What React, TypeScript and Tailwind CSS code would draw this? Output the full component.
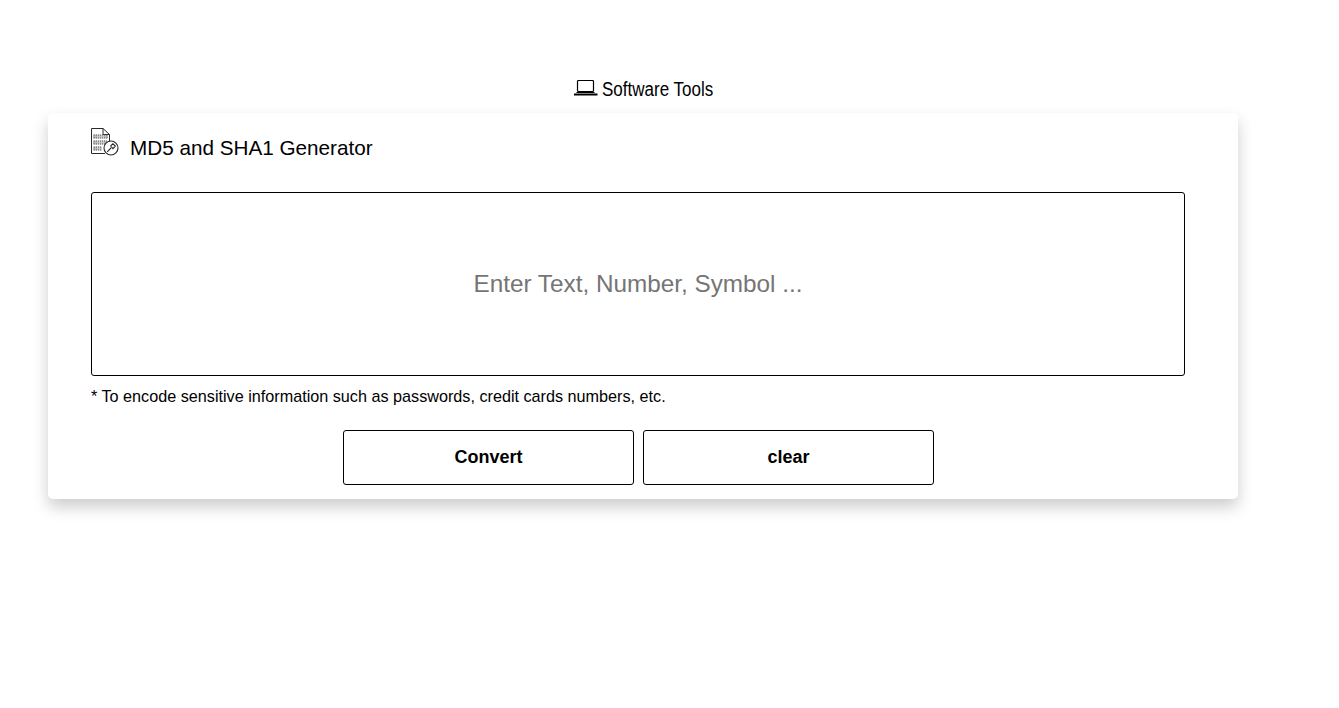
import React from 'react';

const font = { fontFamily: '"Liberation Sans", Arial, sans-serif' };

const LaptopIcon = () => (
  <svg width="24" height="17" viewBox="0 0 24 17" fill="none" stroke="#000">
    <rect x="3.5" y="0.5" width="16" height="11" rx="1" strokeWidth="1.2" />
    <path d="M0 14.5H23.5" strokeWidth="2" />
    <path d="M2.5 12.5H20.5" strokeWidth="1" />
  </svg>
);

const HashIcon = () => (
  <svg width="28" height="28" viewBox="0 0 28 28" fill="none" stroke="#2a2a2a" strokeWidth="1">
    <path d="M0.5 0.5H12L18.5 6.5V15M12 0.5V6.5H18.5M0.5 0.5V25.5H14" />
    <g strokeDasharray="1.4 0.7" strokeWidth="4" stroke="#555">
      <path d="M2.5 8.5H17" />
      <path d="M2.5 14.5H16" />
      <path d="M2.5 20.5H11" />
    </g>
    <g strokeDasharray="0.7 1.4" strokeDashoffset="-0.35" strokeWidth="2" stroke="#eee">
      <path d="M2.5 8.5H17" />
      <path d="M2.5 14.5H16" />
      <path d="M2.5 20.5H11" />
    </g>
    <circle cx="20" cy="20" r="7" fill="#fff" strokeWidth="1.1" />
    <path d="M16.2 23.8L20 20M19.5 18L22 15.8L24.3 18L22 20.6L19.5 18" strokeWidth="1.1" />
  </svg>
);

export default function App() {
  return (
    <div className="min-h-screen bg-white text-black pt-[78px] pl-12" style={font}>
      <div className="w-[1190px]">
        <div className="flex h-[35px] items-start justify-center gap-[4px] text-[20px] leading-[22px]">
          <span className="mt-[2px]"><LaptopIcon /></span>
          <span className="inline-block w-[110px] origin-left scale-x-[0.85] whitespace-nowrap">Software Tools</span>
        </div>
        <div className="h-[386px] rounded-[5px] bg-white pl-[43px] pr-[53px] pt-[14px] shadow-[0_8px_16px_rgba(0,0,0,0.2)]">
          <div className="flex h-[65px] items-start gap-[11px]">
            <span className="mt-px"><HashIcon /></span>
            <h1 className="mt-[8px] text-[20.7px] font-normal leading-[26px]">MD5 and SHA1 Generator</h1>
          </div>
          <textarea
            className="block h-[184px] w-full resize-none rounded-[3px] border border-black pt-[77px] text-center text-[24.3px] leading-[28px] outline-none placeholder:text-[#757575]"
            placeholder="Enter Text, Number, Symbol ..."
          />
          <p className="mt-[10px] text-[16.2px] leading-[20px]">* To encode sensitive information such as passwords, credit cards numbers, etc.</p>
          <div className="mt-[24px] flex justify-center gap-[9px]">
            <button className="h-[55px] w-[291px] rounded-[3px] border border-black bg-white pl-[1px] text-[18px] font-bold">Convert</button>
            <button className="h-[55px] w-[291px] rounded-[3px] border border-black bg-white pl-[1px] text-[18px] font-bold">clear</button>
          </div>
        </div>
      </div>
    </div>
  );
}
